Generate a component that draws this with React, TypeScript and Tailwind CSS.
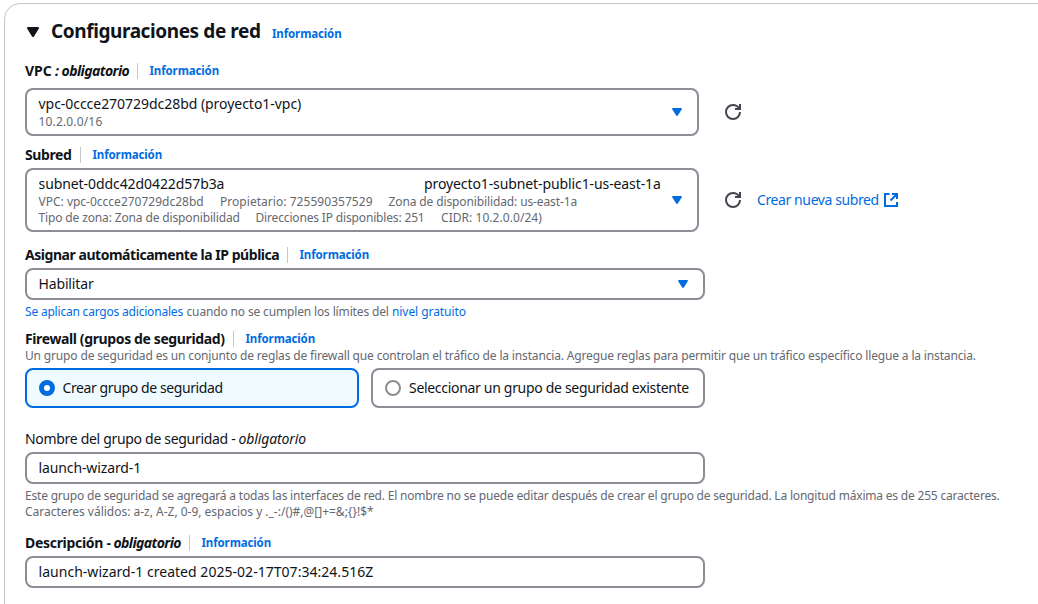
import type { ReactNode } from "react";

function Caret({ className }: { className: string }) {
  return (
    <svg viewBox="0 0 10 8" className={className} fill="currentColor" preserveAspectRatio="none" aria-hidden="true">
      <path d="M0.9 0h8.2c.7 0 1.1.7.7 1.3L5.8 7.5c-.4.6-1.2.6-1.6 0L.2 1.3C-.2.7.2 0 .9 0z" />
    </svg>
  );
}

function Refresh() {
  return (
    <svg viewBox="0 0 16 16" className="size-4 shrink-0 text-[#424650]" fill="none" stroke="currentColor" strokeWidth="2" aria-hidden="true">
      <path d="M10 5h5V0" />
      <path d="M15 8c0 3.87-3.13 7-7 7s-7-3.13-7-7 3.13-7 7-7c2.79 0 5.2 1.63 6.33 4" />
    </svg>
  );
}

function External() {
  return (
    <svg viewBox="0 0 16 16" className="size-4 shrink-0" fill="none" stroke="currentColor" strokeWidth="2" aria-hidden="true">
      <path d="M9 2h5v5M7.5 8.500L14 2M14 10v4H2V2h4.500" />
    </svg>
  );
}

function Info() {
  return <a className="text-[11.5px] leading-5 font-bold tracking-[-0.12px] text-[#006ce0]">Información</a>;
}

function Label({ children, info = true }: { children: ReactNode; info?: boolean }) {
  return (
    <div className="flex h-5 items-center leading-5 whitespace-nowrap">
      {children}
      {info && (
        <>
          <span className="mr-[11.5px] ml-2 h-4 w-px bg-[#c6c6cd]" />
          <Info />
        </>
      )}
    </div>
  );
}

const box = "flex items-center rounded-lg border-2 border-[#8c8c94] bg-white";

export default function App() {
  return (
    <div className="h-[604px] w-[1038px] overflow-hidden bg-white pt-[3px] pl-1 font-['Noto_Sans','Open_Sans',sans-serif] text-sm whitespace-nowrap text-[#0f141a]">
      <section className="h-[640px] w-[1060px] rounded-2xl border border-[#c6c6cd] pt-[15px] pl-5">
        <header className="flex h-6 items-center">
          <Caret className="mt-0.5 ml-0.5 h-[10px] w-3" />
          <h2 className="ml-3 w-[209px] text-[19px] leading-6 font-bold tracking-[-0.41px]">Configuraciones de red</h2>
          <span className="mt-1.5 ml-3 flex"><Info /></span>
        </header>

        <div className="mt-[18px]">
          <Label>
            <span className="w-[27px] font-bold">VPC</span>
            <span className="ml-[3px] w-[74px] font-bold italic tracking-[-0.55px]">: obligatorio</span>
          </Label>
          <div className="mt-[7px] flex items-center">
            <div className={`${box} h-12 w-[674px] pr-[15px] pl-[11.5px]`}>
              <div className="flex-1">
                <div className="leading-5 tracking-[-0.04px]">vpc-0ccce270729dc28bd (proyecto1-vpc)</div>
                <div className="text-xs leading-4 tracking-[0.16px] text-[#656871]">10.2.0.0/16</div>
              </div>
              <Caret className="h-2 w-[10px] text-[#006ce0]" />
            </div>
            <span className="ml-[26px]"><Refresh /></span>
          </div>
        </div>

        <div className="mt-[9px]">
          <Label><span className="w-[47px] font-bold tracking-[-0.4px]">Subred</span></Label>
          <div className="mt-[3px] flex items-center">
            <div className={`${box} h-16 w-[674px] pr-[15px] pl-[11.5px]`}>
              <div className="flex-1">
                <div className="flex h-5 leading-5">
                  <span className="w-[385.5px] tracking-[-0.08px]">subnet-0ddc42d0422d57b3a</span>
                  <span className="tracking-[-0.1px]">proyecto1-subnet-public1-us-east-1a</span>
                </div>
                <div className="flex gap-4 text-xs leading-4 text-[#656871]">
                  <span className="w-[165.5px]">VPC: vpc-0ccce270729dc28bd</span>
                  <span className="w-[152.5px] tracking-[0.04px]">Propietario: 725590357529</span>
                  <span className="tracking-[-0.12px]">Zona de disponibilidad: us-east-1a</span>
                </div>
                <div className="flex gap-4 text-xs leading-4 text-[#656871]">
                  <span className="w-[201px] tracking-[-0.14px]">Tipo de zona: Zona de disponibilidad</span>
                  <span className="w-[169.5px] tracking-[-0.16px]">Direcciones IP disponibles: 251</span>
                  <span className="tracking-[0.05px]">CIDR: 10.2.0.0/24)</span>
                </div>
              </div>
              <Caret className="h-2 w-[10px] text-[#006ce0]" />
            </div>
            <span className="ml-[26px]"><Refresh /></span>
            <a className="ml-4 flex items-center text-[#006ce0]">
              <span className="w-[126px] tracking-[-0.4px]">Crear nueva subred</span>
              <External />
            </a>
          </div>
        </div>

        <div className="mt-[13px]">
          <Label><span className="w-[254px] font-bold tracking-[-0.46px]">Asignar automáticamente la IP pública</span></Label>
          <div className={`${box} mt-[3px] h-8 w-[680px] justify-between pr-[15px] pl-[11.5px]`}>
            <span className="tracking-[-0.15px]">Habilitar</span>
            <Caret className="h-2 w-[10px] text-[#006ce0]" />
          </div>
          <p className="mt-1 flex text-xs leading-4 text-[#656871]">
            <a className="w-[161.5px] tracking-[-0.2px] text-[#006ce0]">Se aplican cargos adicionales</a>
            <span className="w-[205.5px] tracking-[-0.15px]">cuando no se cumplen los límites del</span>
            <a className="tracking-[-0.07px] text-[#006ce0]">nivel gratuito</a>
          </p>
        </div>

        <div className="mt-[9px]">
          <Label><span className="w-[200px] font-bold tracking-[-0.38px]">Firewall (grupos de seguridad)</span></Label>
          <p className="-mt-px text-xs leading-4 tracking-[-0.156px] text-[#656871]">
            Un grupo de seguridad es un conjunto de reglas de firewall que controlan el tráfico de la instancia. Agregue reglas para permitir que un tráfico específico llegue a la instancia.
          </p>
          <div className="mt-1 flex gap-3">
            <div className="flex h-10 w-[334px] items-center rounded-lg border-2 border-[#006ce0] bg-[#f0fbff] pl-3">
              <span className="size-4 rounded-full border-5 border-[#006ce0] bg-white" />
              <span className="ml-[7.5px] tracking-[-0.4px]">Crear grupo de seguridad</span>
            </div>
            <div className={`${box} h-10 w-[334px] pl-3`}>
              <span className="size-4 rounded-full border-2 border-[#8c8c94] bg-white" />
              <span className="ml-2 tracking-[-0.31px]">Seleccionar un grupo de seguridad existente</span>
            </div>
          </div>
        </div>

        <div className="mt-[21px]">
          <Label info={false}>
            <span className="w-[213.5px] tracking-[-0.31px]">Nombre del grupo de seguridad -</span>
            <span className="italic tracking-[-0.12px]">obligatorio</span>
          </Label>
          <div className={`${box} mt-[3px] h-8 w-[680px] pl-[11.5px]`}>
            <span className="tracking-[-0.12px]">launch-wizard-1</span>
          </div>
          <p className="mt-1 text-xs leading-4 text-[#656871]">
            <span className="block tracking-[-0.194px]">Este grupo de seguridad se agregará a todas las interfaces de red. El nombre no se puede editar después de crear el grupo de seguridad. La longitud máxima es de 255 caracteres.</span>
            <span className="block tracking-[-0.01px]">{"Caracteres válidos: a-z, A-Z, 0-9, espacios y ._-:/()#,@[]+=&;{}!$*"}</span>
          </p>
        </div>

        <div className="mt-[13px]">
          <Label>
            <span className="w-[88.5px] font-bold tracking-[-0.3px]">Descripción -</span>
            <span className="w-[67.5px] font-bold italic tracking-[-0.58px]">obligatorio</span>
          </Label>
          <div className={`${box} mt-[3px] h-8 w-[680px] pl-[11.5px]`}>
            <span className="tracking-[0.03px]">launch-wizard-1 created 2025-02-17T07:34:24.516Z</span>
          </div>
        </div>
      </section>
    </div>
  );
}
